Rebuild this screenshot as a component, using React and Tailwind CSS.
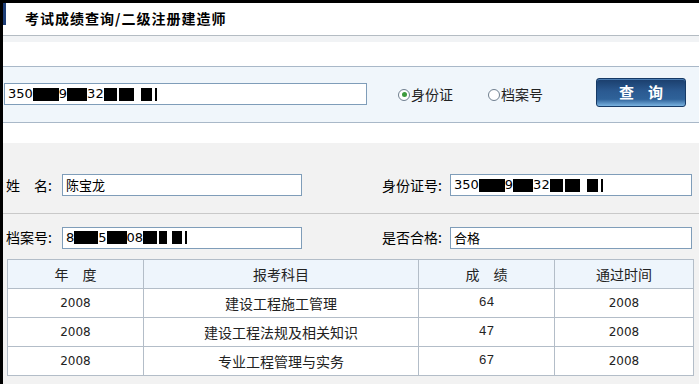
import React from "react";

const cjk = "font-['SimSun','Noto_Sans_CJK_SC',sans-serif]";

function Redacted({ w }) {
  return <span className="inline-block h-[13px] bg-black align-middle" style={{ width: w }} />;
}

function IdValue() {
  return (
    <span className="flex items-center whitespace-nowrap">
      <span>350</span>
      <Redacted w={26} />
      <span>9</span>
      <Redacted w={20} />
      <span>32</span>
      <Redacted w={13} />
      <span className="w-[2px]" />
      <Redacted w={15} />
      <span className="w-[7px]" />
      <Redacted w={11} />
      <span className="ml-[3px] inline-block w-[2px] h-[13px] bg-black" />
    </span>
  );
}

function FileValue() {
  return (
    <span className="flex items-center whitespace-nowrap">
      <span>8</span>
      <Redacted w={24} />
      <span>5</span>
      <Redacted w={20} />
      <span>08</span>
      <Redacted w={14} />
      <span className="w-[2px]" />
      <Redacted w={8} />
      <span className="w-[5px]" />
      <Redacted w={10} />
      <span className="ml-[3px] inline-block w-[2px] h-[13px] bg-black" />
    </span>
  );
}

function Field({ className, children }) {
  return (
    <div
      className={`flex items-center h-[22px] border border-[#7f9db9] bg-white px-[3px] text-[13px] text-black font-['DejaVu_Sans','Noto_Sans_CJK_SC',sans-serif] ${className}`}
    >
      {children}
    </div>
  );
}

function Radio({ checked, label }) {
  return (
    <div className="flex items-center">
      <span className="flex items-center justify-center w-[12px] h-[12px] rounded-full border border-[#6f7f8f] bg-white">
        {checked && <span className="w-[5px] h-[5px] rounded-full bg-[#3d9a3d]" />}
      </span>
      <span className={`ml-[1px] text-[14px] text-[#222] ${cjk}`}>{label}</span>
    </div>
  );
}

const rows = [
  { year: "2008", subject: "建设工程施工管理", score: "64", pass: "2008" },
  { year: "2008", subject: "建设工程法规及相关知识", score: "47", pass: "2008" },
  { year: "2008", subject: "专业工程管理与实务", score: "67", pass: "2008" },
];

export default function App() {
  return (
    <div className="w-[699px] h-[384px] overflow-hidden bg-white flex flex-col">
      <div className="h-[3px] bg-black shrink-0" />
      <div className="flex flex-1">
        <div className="w-[3px] bg-black shrink-0" />
        <div className="flex-1 flex flex-col">
          {/* title */}
          <div className="h-[33px] flex items-start border-b border-[#b4bcc3]">
            <div className="w-[3px] h-[22px] bg-[#1f3f78]" />
            <div className={`ml-[19px] mt-[5px] text-[14px] font-bold tracking-[1px] text-black ${cjk}`}>
              考试成绩查询/二级注册建造师
            </div>
          </div>
          <div className="h-[6px] bg-[#f1f3f5]" />
          <div className="h-[24px]" />

          {/* search band */}
          <div className="h-[57px] border-y border-[#a9b8c8] bg-[#f0f6fb] flex items-start">
            <Field className="mt-[16px] ml-[1px] w-[363px]">
              <IdValue />
            </Field>
            <div className="mt-[17px] ml-[31px] flex items-center gap-[35px] h-[21px]">
              <Radio checked label="身份证" />
              <Radio label="档案号" />
            </div>
            <button className="mt-[11px] ml-[53px] w-[90px] h-[29px] rounded-[3px] border border-[#163a66] bg-[linear-gradient(to_bottom,#1a3d6b_0%,#2b5a91_45%,#2f6299_75%,#7ab3e0_100%)] text-white text-[15px] font-bold tracking-[14px] pl-[14px] font-['SimHei','Noto_Sans_CJK_SC',sans-serif] shadow-[inset_0_1px_0_#4d7fb5]">
              查询
            </button>
          </div>

          <div className="h-[20px]" />

          {/* details */}
          <div className="flex-1 bg-[#f2f2f2] flex flex-col">
            <div className="mt-[31px] flex items-center h-[22px]">
              <span className={`ml-[3px] w-[56px] text-[14px] text-black ${cjk}`}>姓　名:</span>
              <Field className="w-[240px]">
                <span className={cjk}>陈宝龙</span>
              </Field>
              <span className={`ml-[80px] w-[68px] text-[14px] text-black ${cjk}`}>身份证号:</span>
              <Field className="w-[242px]">
                <IdValue />
              </Field>
            </div>
            <div className="mt-[17px] h-px bg-[#c9c9c9]" />
            <div className="mt-[13px] flex items-center h-[21px]">
              <span className={`ml-[3px] w-[56px] text-[14px] text-black ${cjk}`}>档案号:</span>
              <Field className="w-[240px] h-[21px]">
                <FileValue />
              </Field>
              <span className={`ml-[80px] w-[68px] text-[14px] text-black ${cjk}`}>是否合格:</span>
              <Field className="w-[242px] h-[21px]">
                <span className={cjk}>合格</span>
              </Field>
            </div>

            <table className="mt-[11px] ml-[4px] w-[686px] border-collapse table-fixed text-center">
              <colgroup>
                <col className="w-[136px]" />
                <col className="w-[275px]" />
                <col className="w-[136px]" />
                <col className="w-[139px]" />
              </colgroup>
              <thead>
                <tr className={`h-[29px] bg-[#eef5fc] text-[14px] text-[#222] ${cjk}`}>
                  <th className="font-normal border border-[#b3bdc8]">年　度</th>
                  <th className="font-normal border border-[#b3bdc8]">报考科目</th>
                  <th className="font-normal border border-[#b3bdc8]">成　绩</th>
                  <th className="font-normal border border-[#b3bdc8]">通过时间</th>
                </tr>
              </thead>
              <tbody className="bg-white">
                {rows.map((r, i) => (
                  <tr key={i} className="h-[29px]">
                    <td className="border border-[#b3bdc8] text-[12px] text-[#222] font-['DejaVu_Sans',sans-serif]">
                      {r.year}
                    </td>
                    <td className={`border border-[#b3bdc8] text-[14px] text-[#222] whitespace-nowrap ${cjk}`}>
                      {r.subject}
                    </td>
                    <td className="border border-[#b3bdc8] text-[13px] text-[#222] font-['Liberation_Mono',monospace]">
                      {r.score}
                    </td>
                    <td className="border border-[#b3bdc8] text-[12px] text-[#222] font-['DejaVu_Sans',sans-serif]">
                      {r.pass}
                    </td>
                  </tr>
                ))}
              </tbody>
            </table>
          </div>
        </div>
      </div>
    </div>
  );
}
